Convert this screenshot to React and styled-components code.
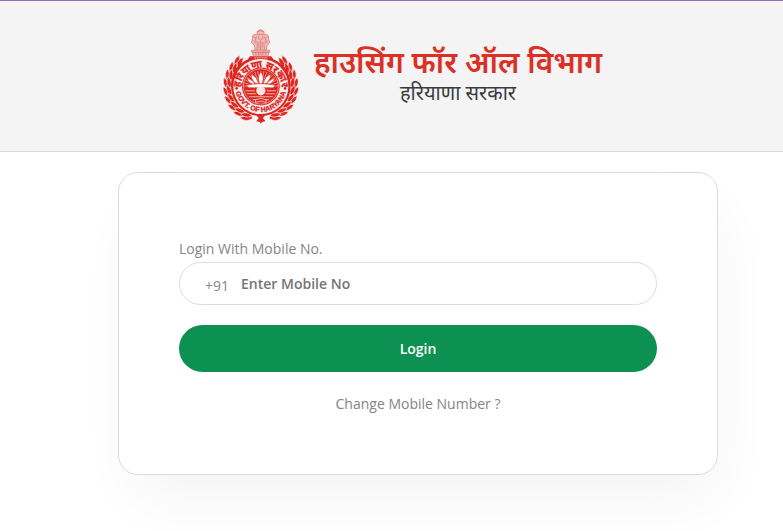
import React from "react";
import styled, { createGlobalStyle } from "styled-components";

const GlobalStyle = createGlobalStyle`
  * { box-sizing: border-box; }
  body {
    margin: 0;
    background: #fff;
    color: #858585;
    font: 14px/20px "Segoe UI", "Open Sans", "Noto Sans", sans-serif;
  }
`;

const Header = styled.header`
  display: flex;
  justify-content: center;
  align-items: flex-start;
  gap: 15px;
  padding: 27px 0 26px 41px;
  background: #f4f4f4;
  border-top: 1px solid #9270b8;
  border-bottom: 1px solid #dcdcdc;
`;

const EmblemSvg = styled.svg`
  flex: none;
  width: 77px;
  height: 97px;
`;

const Titles = styled.div`
  padding-top: 20px;
  text-align: center;
  font-family: "Noto Sans Devanagari", "Noto Sans", "Lohit Devanagari", sans-serif;
`;

const Department = styled.h1`
  margin: 0;
  color: #dc3026;
  font-size: 30px;
  line-height: 36px;
  font-weight: 600;
  white-space: nowrap;
`;

const State = styled.p`
  margin: 0;
  color: #3a3a42;
  font-size: 20px;
  line-height: 22px;
`;

const Main = styled.main`
  display: flex;
  justify-content: center;
  padding: 20px 0 56px 53px;
`;

const Card = styled.form`
  display: flex;
  flex-direction: column;
  width: 100%;
  max-width: 600px;
  padding: 66px 60px 60px;
  background: #fff;
  border: 1px solid #dcdcdc;
  border-radius: 20px;
  box-shadow: 8px 30px 60px -10px rgba(0, 0, 0, 0.05);
`;

const Label = styled.label`
  margin-bottom: 3px;
`;

const Field = styled.div`
  display: flex;
  align-items: center;
  gap: 12px;
  height: 43px;
  padding: 0 25px;
  border: 1px solid #dcdcdc;
  border-radius: 24px;
`;

const Prefix = styled.span`
  padding-top: 4px;
`;

const Input = styled.input`
  flex: 1;
  min-width: 0;
  padding: 0;
  border: 0;
  outline: 0;
  background: transparent;
  color: #555;
  font: inherit;
  font-weight: 600;
  &::placeholder { color: #757575; opacity: 1; }
`;

const LoginButton = styled.button`
  height: 47px;
  margin: 20px 0;
  border: 0;
  border-radius: 24px;
  background: #0d9152;
  color: #fff;
  font: inherit;
  font-weight: 600;
  cursor: pointer;
`;

const ChangeLink = styled.a`
  align-self: center;
  padding-top: 2px;
  color: inherit;
  text-decoration: none;
`;

const RED = "#dc261f";
const leafAngles = [-46, -32, -18, -4, 10, 24, 38, 52, 66];
const rayAngles = Array.from({ length: 17 }, (_, i) => -80 + i * 10);

function WreathSide() {
  return (
    <g fill={RED} stroke="#f8e9e8" strokeWidth="2">
      {leafAngles.map((a) => (
        <g key={a} transform={`rotate(${a}) translate(99 0)`}>
          <path d="M-7 12C-3-2 5-12 12-19C18-6 12 9-1 16Z" />
          <path d="M-9 8C-12-5-6-16 1-22C7-9 3 2-5 10Z" />
        </g>
      ))}
    </g>
  );
}

function Emblem() {
  return (
    <EmblemSvg viewBox="20 22 232 292" role="img" aria-label="Government of Haryana emblem">
      <defs>
        <path id="arc-top" d="M77 219A62 62 0 1 1 197 219" />
        <path id="arc-bottom" d="M60 209A78 78 0 0 0 214 209" />
      </defs>
      <g transform="translate(137 198)">
        <WreathSide />
        <g transform="scale(-1 1)"><WreathSide /></g>
      </g>
      <path fill={RED} d="M104 107H168L175 116Q227 139 227 197A90 90 0 0 1 47 197Q47 139 98 116Z" />
      <circle cx="137" cy="198" r="83" fill="#fbeeee" />
      <circle cx="137" cy="198" r="57" fill={RED} />
      <circle cx="137" cy="198" r="53" fill="none" stroke="#f6c5c2" strokeWidth="2" />
      <text fill={RED} stroke={RED} strokeWidth="1" fontFamily="Noto Sans Devanagari, Noto Sans, sans-serif" fontSize="30" fontWeight="700">
        <textPath href="#arc-top" startOffset="50%" textAnchor="middle">हरियाणा सरकार</textPath>
      </text>
      <text fill={RED} stroke={RED} strokeWidth="1" fontFamily="Liberation Sans, sans-serif" fontSize="21" fontWeight="700">
        <textPath href="#arc-bottom" startOffset="50%" textAnchor="middle">GOVT. OF HARYANA</textPath>
      </text>
      <g fill={RED}>
        <circle cx="64" cy="204" r="4" />
        <circle cx="210" cy="204" r="4" />
      </g>
      <g stroke="#f3b7b3" strokeWidth="2">
        {rayAngles.map((a) => (
          <path key={a} d="M137 188V151" transform={`rotate(${a} 137 205)`} />
        ))}
      </g>
      <g fill="#fff" stroke={RED} strokeWidth="2">
        <path d="M94 172Q111 177 121 192Q102 193 94 172ZM180 172Q163 177 153 192Q172 193 180 172Z" />
        <path d="M107 161Q126 167 130 193Q109 186 107 161ZM167 161Q148 167 144 193Q165 186 167 161Z" />
        <path d="M137 153Q152 174 137 195Q122 174 137 153Z" />
        <path d="M91 195Q137 184 183 195L173 202H101Z" />
      </g>
      <circle cx="137" cy="211" r="14" fill="#fbe5e3" />
      <path fill="none" stroke="#f3b7b3" strokeWidth="3" d="M91 211H119M155 211H183M95 220H122M152 220H179M101 229H173M112 238H162" />
      <path fill={RED} stroke="#fff" strokeWidth="2" d="M121 238Q137 230 153 238V246Q137 239 121 246Z" />
      <g stroke="#d96d68" strokeWidth="2" fill="#f0bbb7">
        <path d="M117 41Q110 45 112 54L109 65L118 75L120 89H154L156 75L164 65L160 54Q163 45 155 41L148 43Q146 27 136 27Q126 27 125 43Z" />
        <path fill="none" d="M124 34Q136 26 148 34M126 41H146M130 47V54L136 58L143 54V47M114 48L121 51M159 48L151 51M124 48L120 59L127 66L125 87M148 48L153 59L146 66L148 87M136 60V87M131 64V84M141 64V84M115 60L122 69M158 60L151 69" />
        <path d="M109 89H164V95H109ZM113 95H160V104H113Z" />
        <path fill="none" d="M122 96V103M130 96V103M143 96V103M151 96V103M133 100H140" />
      </g>
      <path stroke="#fff" strokeWidth="2" fill="none" d="M117 111H157M121 112V116M128 112V117M134 112V115M143 112V117M149 112V116M155 112V115" opacity=".6" />
      <path fill={RED} d="M123 285H151L143 293L151 303L140 305L137 311L134 305L123 303L131 293Z" />
    </EmblemSvg>
  );
}

export default function App() {
  return (
    <>
      <GlobalStyle />
      <Header>
        <Emblem />
        <Titles>
          <Department lang="hi">हाउसिंग फॉर ऑल विभाग</Department>
          <State lang="hi">हरियाणा सरकार</State>
        </Titles>
      </Header>
      <Main>
        <Card onSubmit={(e) => e.preventDefault()}>
          <Label htmlFor="mobile">Login With Mobile No.</Label>
          <Field>
            <Prefix>+91</Prefix>
            <Input id="mobile" type="tel" placeholder="Enter Mobile No" />
          </Field>
          <LoginButton type="submit">Login</LoginButton>
          <ChangeLink href="#change">Change Mobile Number ?</ChangeLink>
        </Card>
      </Main>
    </>
  );
}
